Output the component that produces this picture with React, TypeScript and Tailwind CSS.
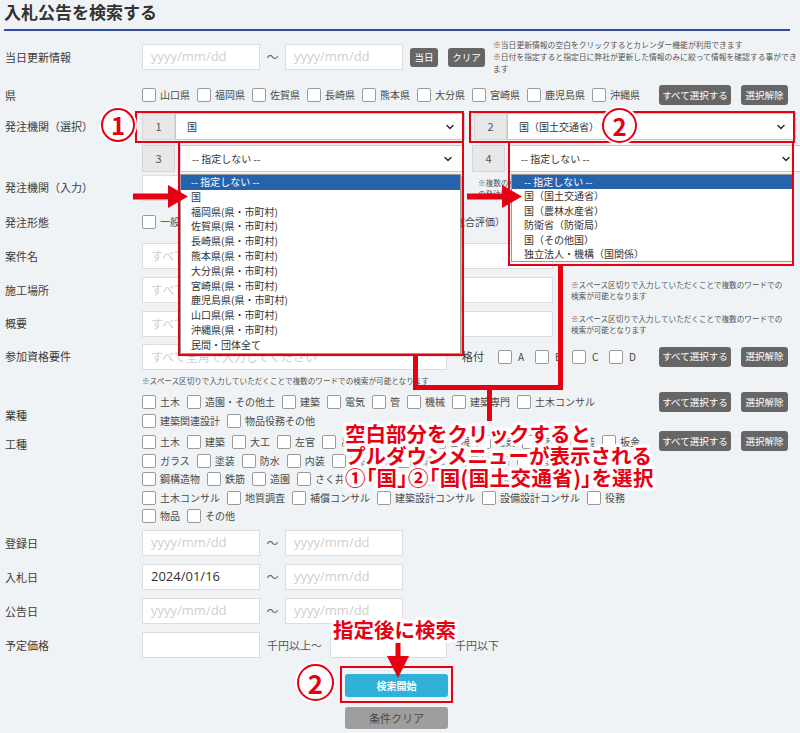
import { ChevronDown } from 'lucide-react';

const KEN = ['山口県', '福岡県', '佐賀県', '長崎県', '熊本県', '大分県', '宮崎県', '鹿児島県', '沖縄県'];
const KEITAI = ['一般競争入札', '指名競争入札', '随意契約', '簡易公募型（総合評価）'];
const GYOSHU = [
  ['土木', '造園・その他土', '建築', '電気', '管', '機械', '建築専門', '土木コンサル'],
  ['建築関連設計', '物品役務その他'],
];
const KOSHU = [
  ['土木', '建築', '大工', '左官', 'とび・土工', '石', '屋根', '電気', '管', '舗装', '板金'],
  ['ガラス', '塗装', '防水', '内装', '機械器具', '熱絶縁', '電気通信', '建具', '水道'],
  ['鋼構造物', '鉄筋', '造園', 'さく井', '消防施設', '清掃施設', '解体', '測量'],
  ['土木コンサル', '地質調査', '補償コンサル', '建築設計コンサル', '設備設計コンサル', '役務'],
  ['物品', 'その他'],
];
const LEFT_OPTS = [
  '-- 指定しない --', '国', '福岡県(県・市町村)', '佐賀県(県・市町村)', '長崎県(県・市町村)', '熊本県(県・市町村)',
  '大分県(県・市町村)', '宮崎県(県・市町村)', '鹿児島県(県・市町村)', '山口県(県・市町村)', '沖縄県(県・市町村)', '民間・団体全て',
];
const RIGHT_OPTS = ['-- 指定しない --', '国（国土交通省）', '国（農林水産省）', '防衛省（防衛局）', '国（その他国）', '独立法人・機構（国関係）'];

const Label = ({ children }: { children: React.ReactNode }) => (
  <div className="w-[142px] shrink-0 pl-[5px] text-[11px] text-[#3c3c3c] whitespace-nowrap">{children}</div>
);

const Check = ({ label }: { label: string }) => (
  <div className="flex items-center h-[14px] mr-[7px] shrink-0">
    <span className="w-[14px] h-[14px] border border-[#9a9a9a] rounded-[2px] bg-white shrink-0" />
    <span className="ml-[4px] text-[10px] leading-none text-[#4a4a4a] whitespace-nowrap">{label}</span>
  </div>
);

const DateBox = ({ value }: { value?: string }) => (
  <div className="w-[118px] h-[26px] bg-white border border-[#dddddd] flex items-center pl-[8px] font-['Open_Sans',sans-serif] text-[13px]">
    {value ? <span className="text-[#333]">{value}</span> : <span className="text-[#cfcfcf]">yyyy/mm/dd</span>}
  </div>
);

const Tilde = () => <div className="w-[25px] text-center text-[12px] text-[#666]">～</div>;

const GrayBtns = () => (
  <div className="flex gap-[10px] shrink-0">
    <div className="w-[72px] h-[20px] rounded-[3px] bg-[#666] text-white text-[9.5px] flex items-center justify-center">すべて選択する</div>
    <div className="w-[47px] h-[20px] rounded-[3px] bg-[#666] text-white text-[9.5px] flex items-center justify-center">選択解除</div>
  </div>
);

const NumBox = ({ n }: { n: string }) => (
  <div className="w-[33px] h-[27px] bg-[#e8e8e8] border border-[#d6d6d6] flex items-center justify-center text-[11px] text-[#555] shrink-0">{n}</div>
);

const Select = ({ text, className }: { text: string; className: string }) => (
  <div className={`h-[27px] bg-white border border-[#bccbe0] flex items-center justify-between pl-[11px] pr-[8px] text-[10px] text-[#333] shrink-0 ${className}`}>
    <span>{text}</span>
    <ChevronDown size={12} strokeWidth={3.2} color="#333" />
  </div>
);

const Note = ({ children }: { children: React.ReactNode }) => (
  <div className="text-[7.6px] leading-[11px] text-[#555] whitespace-nowrap">{children}</div>
);

const halo =
  "[text-shadow:2px_0_0_#fff,-2px_0_0_#fff,0_2px_0_#fff,0_-2px_0_#fff,2px_2px_0_#fff,-2px_-2px_0_#fff,2px_-2px_0_#fff,-2px_2px_0_#fff,3px_0_1px_#fff,-3px_0_1px_#fff,0_3px_1px_#fff,0_-3px_1px_#fff,3px_3px_1px_#fff,-3px_-3px_1px_#fff,3px_-3px_1px_#fff,-3px_3px_1px_#fff]";

export default function App() {
  return (
    <div className="relative w-[800px] h-[733px] overflow-hidden bg-[#f0f3f5] font-['Noto_Sans_CJK_JP','Noto_Sans',sans-serif] text-[#3a3a3a]">
      {/* title */}
      <div className="ml-[4px] mr-[10px] h-[31px] border-b-2 border-[#2f4d9c]">
        <h1 className="text-[17px] font-bold leading-[24px] text-[#333]">入札公告を検索する</h1>
      </div>

      {/* 当日更新情報 */}
      <div className="flex items-center h-[52px]">
        <Label>当日更新情報</Label>
        <DateBox />
        <Tilde />
        <DateBox />
        <div className="ml-[7px] w-[28px] h-[19px] rounded-[3px] bg-[#666] text-white text-[9.5px] flex items-center justify-center">当日</div>
        <div className="ml-[10px] w-[37px] h-[19px] rounded-[3px] bg-[#666] text-white text-[9.5px] flex items-center justify-center">クリア</div>
        <div className="ml-[8px] text-[7.8px] leading-[12px] text-[#555] whitespace-nowrap">
          ※当日更新情報の空白をクリックするとカレンダー機能が利用できます
          <br />
          ※日付を指定すると指定日に弊社が更新した情報のみに絞って情報を確認する事ができ
          <br />
          ます
        </div>
      </div>

      {/* 県 */}
      <div className="flex items-center h-[24px]">
        <Label>県</Label>
        <div className="flex-1 flex items-center justify-between pr-[12px]">
          <div className="flex">{KEN.map((k) => <Check key={k} label={k} />)}</div>
          <GrayBtns />
        </div>
      </div>

      {/* 発注機関（選択） */}
      <div className="flex h-[67px] pt-[6px]">
        <div className="h-[27px] flex items-center"><Label>発注機関（選択）</Label></div>
        <div className="flex flex-col gap-[5px]">
          <div className="flex">
            <NumBox n="1" />
            <Select text="国" className="w-[290px]" />
            <div className="ml-[9px]"><NumBox n="2" /></div>
            <Select text="国（国土交通省）" className="w-[289px]" />
          </div>
          <div className="flex">
            <NumBox n="3" />
            <Select text="-- 指定しない --" className="ml-[5px] w-[283px] border-[#9fc0e4]" />
            <div className="ml-[9px]"><NumBox n="4" /></div>
            <Select text="-- 指定しない --" className="ml-[4px] w-[292px] border-[#9fc0e4]" />
          </div>
        </div>
      </div>

      {/* 発注機関（入力） */}
      <div className="flex items-center h-[27px]">
        <Label>発注機関（入力）</Label>
        <div className="w-[318px] h-[26px] bg-white border border-[#dddddd]" />
        <div className="ml-[18px]">
          <Note>
            ※複数の機関を入力する場合は全ての機関
            <br />
            の発注案件が表示されます
          </Note>
        </div>
      </div>

      {/* 発注形態 */}
      <div className="flex items-center h-[38px] pt-[4px]">
        <Label>発注形態</Label>
        <div className="flex">{KEITAI.map((k) => <Check key={k} label={k} />)}</div>
      </div>

      {/* text inputs */}
      {['案件名', '施工場所', '概要'].map((l, i) => (
        <div key={l} className={`flex items-center ${i === 2 ? 'h-[33px]' : 'h-[34px]'}`}>
          <Label>{l}</Label>
          <div className="w-[411px] h-[26px] bg-white border border-[#dddddd] flex items-center pl-[8px] text-[12px] text-[#cfcfcf]">すべて全角で入力してください</div>
          {i > 0 && (
            <div className="ml-[18px]">
              <Note>
                ※スペース区切りで入力していただくことで複数のワードでの
                <br />
                検索が可能となります
              </Note>
            </div>
          )}
        </div>
      ))}

      {/* 参加資格要件 */}
      <div className="flex items-center h-[33px]">
        <Label>参加資格要件</Label>
        <div className="w-[305px] h-[26px] bg-white border border-[#dddddd] flex items-center pl-[8px] text-[12px] text-[#cfcfcf]">すべて全角で入力してください</div>
        <div className="ml-[15px] w-[36px] text-[11px] text-[#3c3c3c]">格付</div>
        <div className="flex">
          {['A', 'B', 'C', 'D'].map((g) => (
            <div key={g} className="w-[37px] flex items-center">
              <span className="w-[14px] h-[14px] border border-[#9a9a9a] rounded-[2px] bg-white" />
              <span className="ml-[6px] text-[10px] text-[#444]">{g}</span>
            </div>
          ))}
        </div>
        <div className="ml-auto pr-[12px]"><GrayBtns /></div>
      </div>
      <div className="h-[14px] pl-[142px] flex items-center">
        <Note>※スペース区切りで入力していただくことで複数のワードでの検索が可能となります</Note>
      </div>

      {/* 業種 */}
      <div className="flex h-[42px] pt-[8px]">
        <div className="pt-[12px]"><Label>業種</Label></div>
        <div className="flex-1 flex justify-between pr-[12px]">
          <div className="flex flex-col gap-[4.5px]">
            {GYOSHU.map((r, i) => (
              <div key={i} className="flex">{r.map((k) => <Check key={k} label={k} />)}</div>
            ))}
          </div>
          <div className="mt-[-3px]"><GrayBtns /></div>
        </div>
      </div>

      {/* 工種 */}
      <div className="flex h-[97px] pt-[6px]">
        <div className="pt-[1px]"><Label>工種</Label></div>
        <div className="flex-1 flex justify-between pr-[12px]">
          <div className="flex flex-col gap-[4.5px]">
            {KOSHU.map((r, i) => (
              <div key={i} className="flex">{r.map((k) => <Check key={k} label={k} />)}</div>
            ))}
          </div>
          <div className="mt-[-4px]"><GrayBtns /></div>
        </div>
      </div>

      {/* dates */}
      {[
        ['登録日', ''],
        ['入札日', '2024/01/16'],
        ['公告日', ''],
      ].map(([l, v]) => (
        <div key={l} className="flex items-center h-[34px]">
          <Label>{l}</Label>
          <DateBox value={v} />
          <Tilde />
          <DateBox />
        </div>
      ))}
      <div className="flex items-center h-[34px]">
        <Label>予定価格</Label>
        <div className="w-[118px] h-[26px] bg-white border border-[#dddddd]" />
        <div className="ml-[7px] text-[11px] text-[#555]">千円以上～</div>
        <div className="ml-[8px] w-[117px] h-[26px] bg-white border border-[#dddddd]" />
        <div className="ml-[8px] text-[11px] text-[#555]">千円以下</div>
      </div>

      {/* action buttons */}
      <div className="pl-[345px] pt-[12px] flex flex-col gap-[10px]">
        <div className="w-[103px] h-[23px] rounded-[3px] bg-[#2fb1d9] text-white text-[10px] font-bold flex items-center justify-center">検索開始</div>
        <div className="w-[103px] h-[22px] rounded-[3px] bg-[#9e9e9e] text-[#4a4a4a] text-[11px] flex items-center justify-center">条件クリア</div>
      </div>

      {/* open dropdown lists */}
      <div className="absolute left-[180px] top-[174px] w-[281px] bg-white border border-[#9a9a9a] shadow-[2px_2px_2px_rgba(0,0,0,0.25)]">
        {LEFT_OPTS.map((o, i) => (
          <div key={o} className={`h-[14.8px] pl-[10px] text-[10px] leading-[14.8px] whitespace-nowrap ${i === 0 ? 'bg-[#2762ad] text-white' : 'text-[#333]'}`}>{o}</div>
        ))}
      </div>
      <div className="absolute left-[511px] top-[174px] w-[282px] bg-white border border-[#9a9a9a]">
        {RIGHT_OPTS.map((o, i) => (
          <div key={o} className={`h-[14.4px] pl-[12px] text-[10px] leading-[14.4px] whitespace-nowrap ${i === 0 ? 'bg-[#2762ad] text-white' : 'text-[#333]'}`}>{o}</div>
        ))}
      </div>

      {/* red frames */}
      <div className="absolute left-[135px] top-[111px] w-[329px] h-[32px] border-2 border-[#e60012]" />
      <div className="absolute left-[469px] top-[111px] w-[326px] h-[32px] border-2 border-[#e60012]" />
      <div className="absolute left-[178px] top-[141px] w-[286px] h-[215px] border-2 border-[#e60012]" />
      <div className="absolute left-[508px] top-[141px] w-[286px] h-[125px] border-2 border-[#e60012]" />

      {/* connectors */}
      <div className="absolute left-[413px] top-[355px] w-[5px] h-[35px] bg-[#e60012]" />
      <div className="absolute left-[413px] top-[385px] w-[150px] h-[5px] bg-[#e60012]" />
      <div className="absolute left-[558px] top-[264px] w-[5px] h-[126px] bg-[#e60012]" />
      <div className="absolute left-[487px] top-[388px] w-[5px] h-[33px] bg-[#e60012]" />

      {/* arrows */}
      <svg className="absolute left-[133px] top-[185px]" width="55" height="23" viewBox="0 0 55 23">
        <rect x="0" y="8.5" width="38" height="6" fill="#e60012" />
        <polygon points="35,0 55,11.5 35,23" fill="#e60012" />
      </svg>
      <svg className="absolute left-[467px] top-[185px]" width="55" height="23" viewBox="0 0 55 23">
        <rect x="0" y="8.5" width="38" height="6" fill="#e60012" />
        <polygon points="35,0 55,11.5 35,23" fill="#e60012" />
      </svg>
      <svg className="absolute left-[387px] top-[643px]" width="22" height="35" viewBox="0 0 22 35">
        <rect x="8.5" y="0" width="5" height="15" fill="#e60012" />
        <polygon points="0,13 22,13 11,35" fill="#e60012" />
      </svg>

      {/* circled numbers */}
      <div className="absolute left-[101px] top-[108px] w-[34px] h-[34px] rounded-full border-[2.5px] border-[#e60012] bg-white shadow-[0_0_0_2px_#fff] flex items-center justify-center text-[24px] font-bold leading-none text-[#e60012]">1</div>
      <div className="absolute left-[602px] top-[108px] w-[35px] h-[35px] rounded-full border-[2.5px] border-[#e60012] bg-white shadow-[0_0_0_2px_#fff] flex items-center justify-center text-[24px] font-bold leading-none text-[#e60012]">2</div>
      <div className="absolute left-[297px] top-[664px] w-[37px] h-[37px] rounded-full border-[2.5px] border-[#e60012] bg-white shadow-[0_0_0_2px_#fff] flex items-center justify-center text-[26px] font-bold leading-none text-[#e60012]">2</div>

      {/* annotation text */}
      <div className={`absolute left-[345px] top-[422px] text-[20.5px] font-bold leading-[22px] text-[#e60012] whitespace-nowrap ${halo}`}>
        <div>空白部分をクリックすると</div>
        <div>プルダウンメニューが表示される</div>
        <div className="[font-feature-settings:'palt'] tracking-[0.4px]">①「国」②「国(国土交通省)」を選択</div>
      </div>
      <div className={`absolute left-[333px] top-[617px] text-[20.5px] font-bold leading-[24px] text-[#e60012] whitespace-nowrap ${halo}`}>指定後に検索</div>

      {/* frame around search button */}
      <div className="absolute left-[340px] top-[666px] w-[113px] h-[37px] border-2 border-[#e60012]" />
    </div>
  );
}
